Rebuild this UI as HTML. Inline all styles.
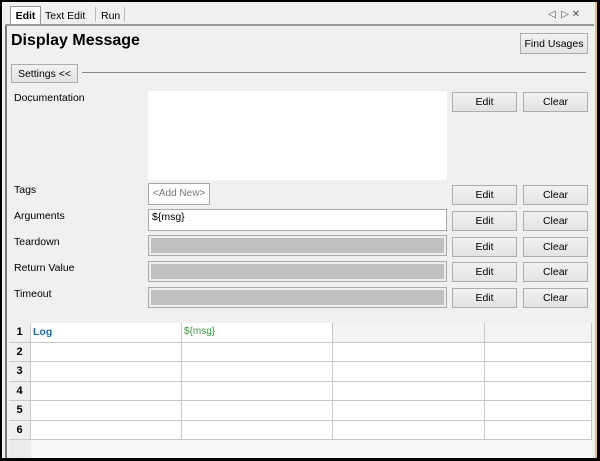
<!DOCTYPE html>
<html><head><style>
*{margin:0;padding:0;box-sizing:border-box}
body{width:600px;height:461px;overflow:hidden;background:#000;font-family:"Liberation Sans",sans-serif;font-size:10.5px;color:#000;position:relative}
.a{position:absolute;white-space:nowrap}
.btn{position:absolute;background:linear-gradient(#f2f2f2,#e3e3e3);border:1px solid #adadad;display:flex;align-items:center;justify-content:center;font-size:10.5px}
.lbl{position:absolute;left:14px;font-size:10.5px}
.gray{position:absolute;left:148px;width:299px;height:21px;border:1px solid #aaa;background:#c0c0c0;box-shadow:inset 0 0 0 2px #eee}
.cell{position:absolute;border-right:1px solid #c8c8c8;border-bottom:1px solid #c8c8c8;background:#fff;height:20px}
.rh{position:absolute;left:9px;width:22px;height:20px;background:#f0f0f0;border-right:1px solid #c8c8c8;border-bottom:1px solid #c8c8c8;font-weight:bold;text-align:center;line-height:19px;font-size:11px}
</style></head><body>
<div class="a" style="left:2px;top:2px;width:594px;height:456px;background:#f0f0f0"></div>
<div class="a" style="left:595px;top:2px;width:2px;height:456px;background:#e0c080"></div>
<div class="a" style="left:10px;top:6px;width:31px;height:19px;background:#fff;border:1px solid #999;border-bottom:none;font-weight:bold;line-height:18px;text-align:center">Edit</div>
<div class="a" style="left:45px;top:9px;line-height:15px">Text Edit</div>
<div class="a" style="left:95px;top:7px;width:1px;height:15px;background:#bbb"></div>
<div class="a" style="left:101px;top:9px;line-height:15px">Run</div>
<div class="a" style="left:124px;top:7px;width:1px;height:15px;background:#bbb"></div>
<div class="a" style="left:548px;top:9px;font-size:10px;color:#555">◁ &nbsp;▷ ✕</div>
<div class="a" style="left:5px;top:24px;width:589px;height:2px;background:#999"></div>
<div class="a" style="left:5px;top:26px;width:2px;height:432px;background:#777"></div>
<div class="a" style="left:11px;top:32px;font-size:16px;font-weight:bold">Display Message</div>
<div class="btn" style="left:520px;top:33px;width:68px;height:21px">Find Usages</div>
<div class="btn" style="left:11px;top:64px;width:67px;height:19px">Settings &lt;&lt;</div>
<div class="a" style="left:82px;top:72px;width:504px;height:1px;background:#888"></div>
<div class="lbl" style="top:92px">Documentation</div>
<div class="a" style="left:148px;top:91px;width:299px;height:89px;background:#fff"></div>
<div class="lbl" style="top:184px">Tags</div>
<div class="a" style="left:148px;top:183px;width:62px;height:22px;background:#fff;border:1px solid #aaa;color:#777;line-height:20px;padding-left:4px;font-size:10px">&lt;Add New&gt;</div>
<div class="lbl" style="top:210px">Arguments</div>
<div class="a" style="left:148px;top:209px;width:299px;height:22px;background:#fff;border:1px solid #aaa;line-height:15px;padding-left:3px">${msg}</div>
<div class="lbl" style="top:236px">Teardown</div><div class="gray" style="top:235px"></div>
<div class="lbl" style="top:262px">Return Value</div><div class="gray" style="top:261px"></div>
<div class="lbl" style="top:288px">Timeout</div><div class="gray" style="top:287px"></div>
<div class="btn" style="left:452px;top:92px;width:65px;height:20px">Edit</div><div class="btn" style="left:523px;top:92px;width:65px;height:20px">Clear</div>
<div class="btn" style="left:452px;top:185px;width:65px;height:20px">Edit</div><div class="btn" style="left:523px;top:185px;width:65px;height:20px">Clear</div>
<div class="btn" style="left:452px;top:211px;width:65px;height:20px">Edit</div><div class="btn" style="left:523px;top:211px;width:65px;height:20px">Clear</div>
<div class="btn" style="left:452px;top:237px;width:65px;height:20px">Edit</div><div class="btn" style="left:523px;top:237px;width:65px;height:20px">Clear</div>
<div class="btn" style="left:452px;top:262px;width:65px;height:20px">Edit</div><div class="btn" style="left:523px;top:262px;width:65px;height:20px">Clear</div>
<div class="btn" style="left:452px;top:288px;width:65px;height:20px">Edit</div><div class="btn" style="left:523px;top:288px;width:65px;height:20px">Clear</div>
<div class="a" style="left:9px;top:323px;width:583px;height:135px;background:#f7f7f7"></div>
<div class="a" style="left:9px;top:323px;width:22px;height:135px;background:#ececec"></div>
<div id="g"></div>
<script>
var ys=[323,343,362,382,401,421],xs=[31,182,333,485,592],h='';
ys.forEach(function(y,i){
h+='<div class="rh" style="top:'+y+'px;height:'+((ys[i+1]||440)-y)+'px">'+(i+1)+'</div>';
for(var j=0;j<4;j++){h+='<div class="cell" style="left:'+xs[j]+'px;top:'+y+'px;width:'+(xs[j+1]-xs[j])+'px;height:'+((ys[i+1]||440)-y)+'px;'+(i==0&&j>1?'background:#f4f4f4':'')+'"></div>';}
});
document.getElementById('g').innerHTML=h;
</script>
<div class="a" style="left:33px;top:326px;color:#1a6fa8;font-weight:bold">Log</div>
<div class="a" style="left:184px;top:326px;color:#3a9a3a;font-size:10px">${msg}</div>
</body></html>
